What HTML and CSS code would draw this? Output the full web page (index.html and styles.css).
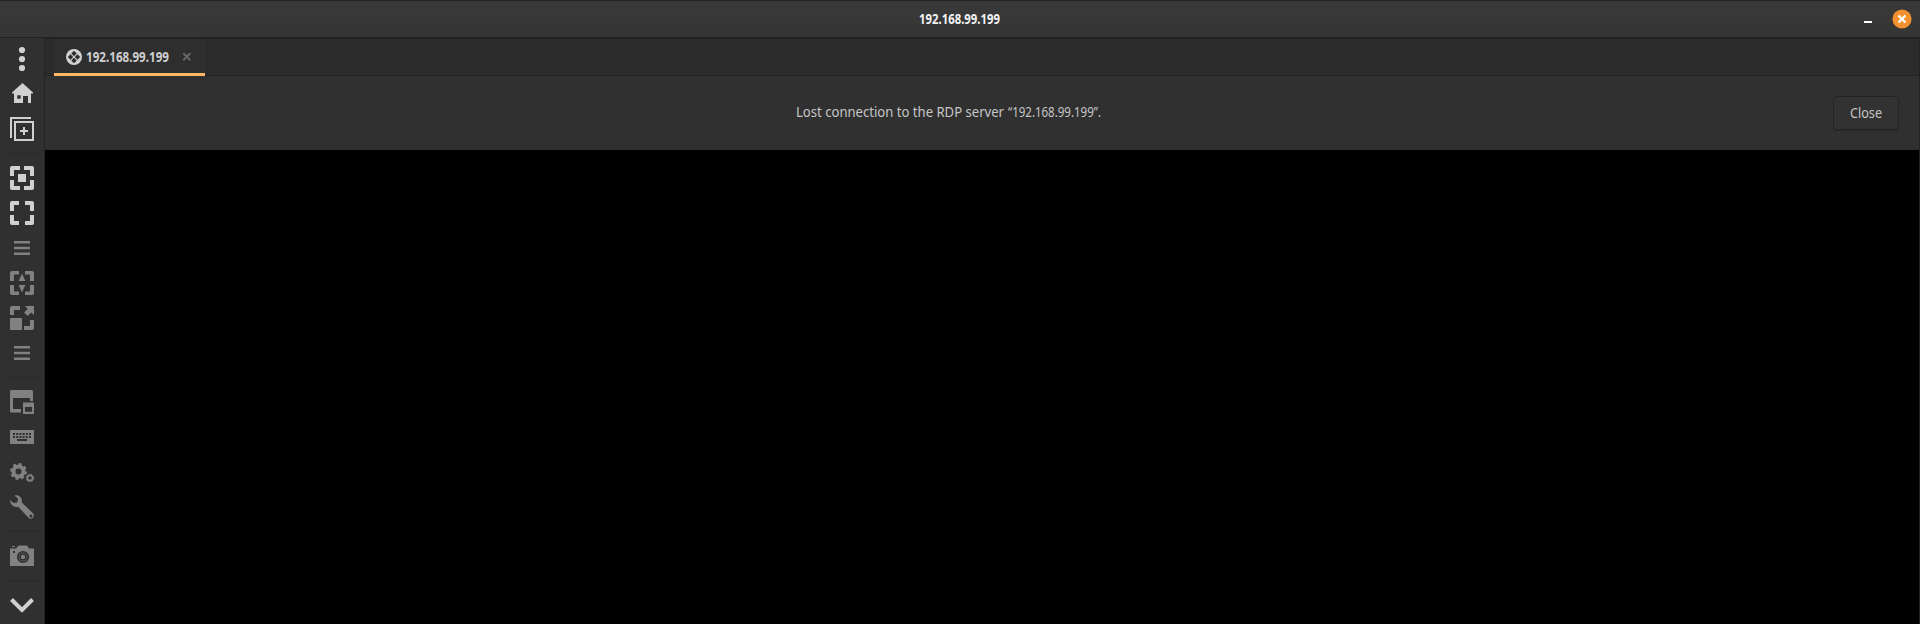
FILE: index.html
```html
<!DOCTYPE html>
<html lang="en">
<head>
<meta charset="utf-8">
<title>192.168.99.199</title>
<link rel="stylesheet" href="styles.css">
</head>
<body>
<div class="window">
  <header class="titlebar">
    <svg class="title" width="84" height="24"><text x="1" y="17" textLength="81" lengthAdjust="spacingAndGlyphs">192.168.99.199</text></svg>
    <div class="controls">
      <span class="minimize"></span>
      <svg class="close" width="20" height="20" viewBox="0 0 20 20"><circle cx="10" cy="10" r="9.6" fill="#f29130"/><path d="M6.5 6.5l7 7M13.5 6.5l-7 7" stroke="#fff" stroke-width="2.3"/></svg>
    </div>
  </header>
  <div class="body">
    <nav class="toolbar">
      <svg viewBox="0 0 24 24"><circle cx="12" cy="3" r="3.1"/><circle cx="12" cy="12" r="3.1"/><circle cx="12" cy="21" r="3.1"/></svg>
      <svg viewBox="0 0 24 24"><path fill-rule="evenodd" d="M12.5 1L23 10.5V11.5H21V21H18V14H13V21H4V11.5H2V10.5ZM7.3 13.3V16.7H10.7V13.3Z"/></svg>
      <svg viewBox="0 0 24 24"><path class="line" d="M1 21V1H21M5 5H23V23H5ZM14 10V18M10 14H18"/></svg>
      <hr>
      <svg viewBox="0 0 24 24"><path d="M0 10V2Q0 0 2 0H10V4H4V10ZM14 0H22Q24 0 24 2V10H20V4H14ZM0 14H4V20H10V24H2Q0 24 0 22ZM20 14H24V22Q24 24 22 24H14V20H20ZM8 8H16V16H8Z"/></svg>
      <svg viewBox="0 0 24 24"><path d="M0 10V2Q0 0 2 0H9V4H4V10ZM15 0H22Q24 0 24 2V10H20V4H15ZM0 14H4V20H9V24H2Q0 24 0 22ZM20 14H24V22Q24 24 22 24H15V20H20Z"/></svg>
      <svg class="dim" viewBox="0 0 24 24"><path d="M4 5H20V7.6H4ZM4 10.8H20V13.2H4ZM4 16.5H20V19H4Z"/></svg>
      <svg class="dim" viewBox="0 0 24 24"><path d="M0 10V2Q0 0 2 0H9V3.5H4V10ZM15 0H22Q24 0 24 2V10H20V3.5H15ZM0 14H4V20.5H9V24H2Q0 24 0 22ZM20 14H24V22Q24 24 22 24H15V20.5H20ZM12 2.5L15.4 10H8.6ZM8.6 14H15.4L12 21.5Z"/></svg>
      <svg class="dim" viewBox="0 0 24 24"><path d="M0 9V2Q0 0 2 0H10V4H4V9ZM0 12H12V24H0ZM20 14H24V22Q24 24 22 24H14V20H20ZM15 0H24V9L21.3 6.4L17.6 10L14.1 6.5L17.7 2.8Z"/></svg>
      <svg class="dim" viewBox="0 0 24 24"><path d="M4 5H20V7.6H4ZM4 10.8H20V13.2H4ZM4 16.5H20V19H4Z"/></svg>
      <hr>
      <svg class="dim" viewBox="0 0 24 24"><path fill-rule="evenodd" d="M1.5 0H21.5Q23 0 23 1.5V11H20V8H3V19H11V22.5H1.5Q0 22.5 0 21V1.5Q0 0 1.5 0ZM13 12.5H24V24H13ZM15 17V21.7H22V17Z"/></svg>
      <svg class="dim" viewBox="0 0 24 24"><path d="M0 5H24V19H0Z"/><path class="cut" stroke-dasharray="2 1.2" d="M3 9H21M3 12H21"/><path class="cut" d="M7 15H17"/></svg>
      <svg class="dim" viewBox="0 0 24 24"><circle class="ring" cx="8.5" cy="11.5" r="5"/><circle class="teeth" cx="8.5" cy="11.5" r="7.4" stroke-dasharray="3 2.81"/><circle class="smallring" cx="20" cy="18" r="2.7"/><circle class="smallteeth" cx="20" cy="18" r="3.8" stroke-dasharray="1.5 1.48"/></svg>
      <svg class="dim" viewBox="0 0 24 24"><path fill-rule="evenodd" d="M4.5 .4C8.8-.8 12.8 2.8 11.8 7.4L23 18.3C25.6 21.3 21.8 25.4 18.7 22.9L8.1 11.7C4 13.1-.2 9.5 .2 5L3.4 8.1L7.2 7.4L8.1 3.8ZM21 19.5A1.5 1.5 0 1 0 21 22.5A1.5 1.5 0 1 0 21 19.5Z"/></svg>
      <hr>
      <svg class="dim" viewBox="0 0 24 24"><path fill-rule="evenodd" d="M0 4.5H6L8.5 1.5H17L19 4.5H24V22H0ZM3 7V9H5V7ZM2 2H5V3H2Z"/><circle cx="13" cy="13" r="5.2" fill="#818181" stroke="#303030" stroke-width="1.8"/><circle cx="13" cy="13" r="3" fill="#818181" stroke="#303030" stroke-width="1.6"/></svg>
      <hr>
      <svg viewBox="0 0 24 24"><path fill="none" stroke="#d0d0d0" stroke-width="4" d="M1.5 6.5L12 17L22.5 6.5"/></svg>
    </nav>
    <main class="content">
      <div class="tabs">
        <div class="tab">
          <svg width="16" height="16" viewBox="0 0 16 16"><circle cx="8" cy="8" r="8" fill="#d0d0d0"/><path d="M8 1.8L10.7 4.5L8 7.2L5.3 4.5ZM14.2 8L11.5 10.7L8.8 8L11.5 5.3ZM8 14.2L5.3 11.5L8 8.8L10.7 11.5ZM1.8 8L4.5 5.3L7.2 8L4.5 10.7Z" fill="#2e2e2e"/></svg>
          <svg class="tabtext" width="85" height="24"><text x="0" y="17" textLength="83" lengthAdjust="spacingAndGlyphs">192.168.99.199</text></svg>
          <svg class="tabclose" width="10" height="10" viewBox="0 0 10 10"><path d="M1.3 1.3l7 7M8.3 1.3l-7 7" stroke="#656565" stroke-width="2"/></svg>
        </div>
      </div>
      <div class="notice">
        <svg class="message" width="312" height="26"><text x="0" y="17" textLength="208" lengthAdjust="spacingAndGlyphs">Lost connection to the RDP server</text><text x="212" y="17" textLength="93" lengthAdjust="spacingAndGlyphs">“192.168.99.199”.</text></svg>
        <button class="button"><svg width="36" height="24"><text x="2" y="16.5" textLength="32" lengthAdjust="spacingAndGlyphs">Close</text></svg></button>
      </div>
      <div class="screen"></div>
    </main>
  </div>
</div>
</body>
</html>
```
FILE: styles.css
```css
* { box-sizing: border-box; }
body { margin: 0; background: #303030; font-family: "Noto Sans", sans-serif; }
svg { display: block; flex: none; overflow: visible; }
.window { width: 1920px; height: 624px; display: flex; flex-direction: column; overflow: hidden; }
.titlebar { height: 38px; flex: none; display: grid; grid-template-columns: 1fr 84px 1fr; align-items: center; background: linear-gradient(#393939, #353535); border-top: 1px solid #242424; border-bottom: 1px solid #212121; }
.title { grid-column: 2; font-size: 14px; font-weight: 700; fill: #f2f2f2; }
.controls { display: flex; justify-content: flex-end; align-items: center; gap: 20px; padding-right: 8px; }
.minimize { width: 8px; height: 2px; background: #fff; margin-top: 6px; }
.body { flex: 1; display: flex; min-height: 0; }
.toolbar { width: 45px; flex: none; padding: 9px 0 0; display: flex; flex-direction: column; align-items: center; gap: 11px; border-right: 1px solid #232323; background: #303030; }
.toolbar svg { width: 24px; height: 24px; fill: #d0d0d0; }
.toolbar .dim { fill: #818181; }
.toolbar hr { width: 36px; height: 1px; flex: none; margin: 1px 0; border: 0; background: #292929; }
.line { fill: none; stroke: #d0d0d0; stroke-width: 2; }
.cut { fill: none; stroke: #303030; stroke-width: 2; }
.ring { fill: none; stroke: #818181; stroke-width: 4; }
.teeth { fill: none; stroke: #818181; stroke-width: 2.2; }
.smallring { fill: none; stroke: #818181; stroke-width: 1.8; }
.smallteeth { fill: none; stroke: #818181; stroke-width: 1; }
.content { flex: 1; display: flex; flex-direction: column; border-right: 1px solid #222; }
.tabs { height: 38px; flex: none; padding-left: 9px; background: #2b2b2b linear-gradient(#232323, #232323) bottom / 100% 1px no-repeat; border-top: 1px solid #232323; }
.tab { width: 151px; height: 37px; padding: 2px 0 0 12px; display: flex; align-items: center; background: #2e2e2e; border-bottom: 3px solid #ffb964; }
.tabtext { margin-left: 4px; font-size: 14px; font-weight: 700; fill: #cfcfcf; }
.tabclose { margin-left: 11px; }
.notice { height: 74px; flex: none; display: grid; grid-template-columns: 751px 1fr auto; align-items: center; padding-right: 20px; background: #303030; }
.message { grid-column: 2; font-size: 14px; fill: #c6c6c6; }
.button { width: 66px; height: 34px; padding: 0; display: flex; align-items: center; justify-content: center; background: #323232; border: 1px solid #242424; border-radius: 4px; font-family: inherit; font-size: 14px; fill: #c6c6c6; box-shadow: 0 1px #292929; }
.screen { flex: 1; background: #000; }
```
